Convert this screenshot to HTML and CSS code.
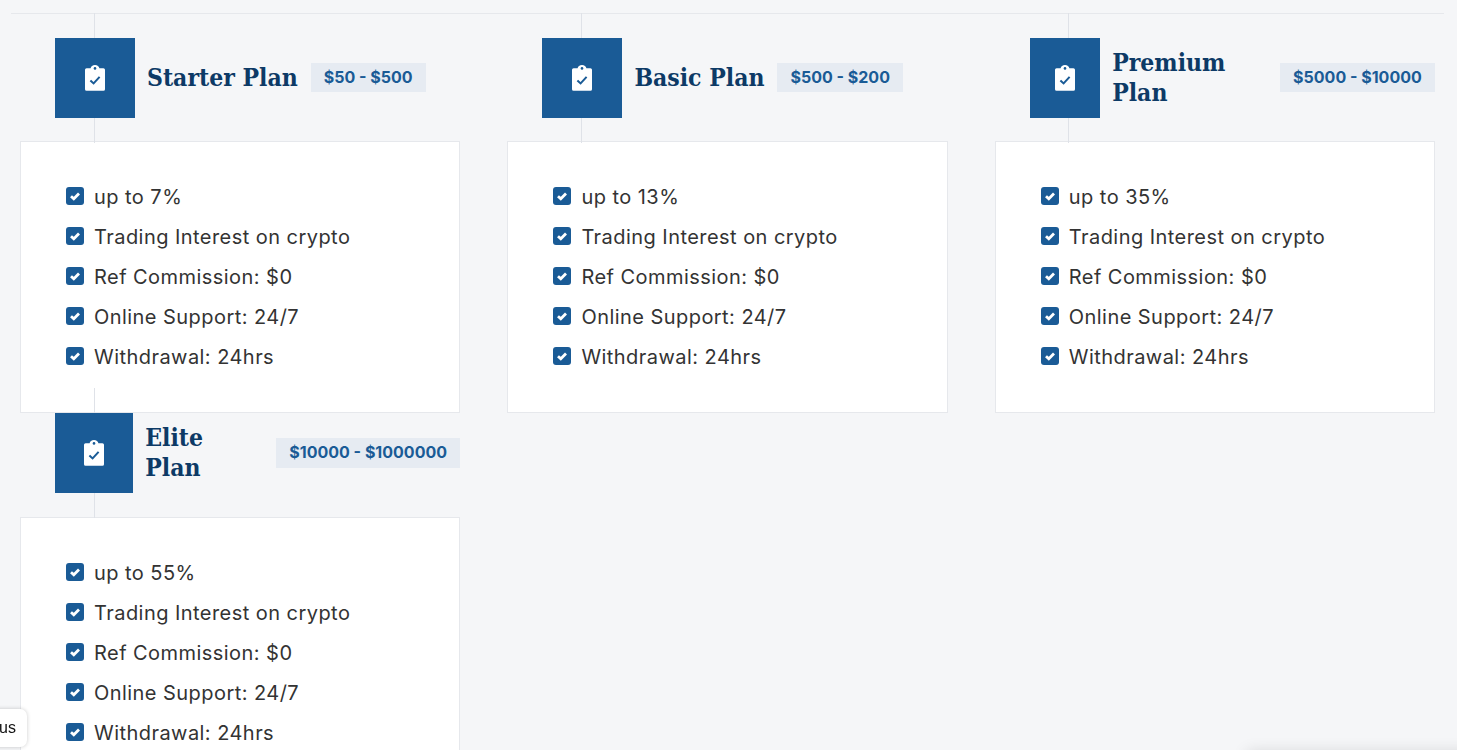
FILE: index.html
```html
<!DOCTYPE html>
<html lang="en">
<head>
    <meta charset="UTF-8">
    <meta name="viewport" content="width=device-width, initial-scale=1.0">
    <title>Investment Plans</title>
    <link rel="stylesheet" href="styles.css">
</head>
<body>
    <svg class="sprite" width="0" height="0" aria-hidden="true">
        <symbol id="clipboard" viewBox="0 0 20 26">
            <path fill="#fff" d="M1.6 3.2H5.6C5.8 1.3 7.7 0 10 0s4.2 1.3 4.4 3.2h4A1.6 1.6 0 0 1 20 4.8v19.4a1.6 1.6 0 0 1-1.6 1.6H1.6A1.6 1.6 0 0 1 0 24.2V4.8a1.6 1.6 0 0 1 1.6-1.6z"/>
            <circle fill="#1a5b96" cx="10" cy="3.4" r="1.3"/>
            <polyline fill="none" stroke="#1a5b96" stroke-width="2" points="5.4,15.4 8.6,18.4 14.6,11.8"/>
        </symbol>
        <symbol id="check" viewBox="0 0 18 18">
            <rect fill="#1a5b96" width="18" height="18" rx="3"/>
            <polyline fill="none" stroke="#fff" stroke-width="2.8" points="5,9.2 7.8,11.8 13,6.6"/>
        </symbol>
    </svg>

    <div class="page">
        <div class="plans">
            <div class="plan">
                <div class="plan-head">
                    <div class="plan-icon"><svg><use href="#clipboard"/></svg></div>
                    <h3 class="plan-title">Starter Plan</h3>
                    <span class="plan-range">$50 - $500</span>
                </div>
                <div class="plan-card">
                    <ul class="plan-list">
                        <li><svg><use href="#check"/></svg>up to 7%</li>
                        <li><svg><use href="#check"/></svg>Trading Interest on crypto</li>
                        <li><svg><use href="#check"/></svg>Ref Commission: $0</li>
                        <li><svg><use href="#check"/></svg>Online Support: 24/7</li>
                        <li><svg><use href="#check"/></svg>Withdrawal: 24hrs</li>
                    </ul>
                </div>
            </div>

            <div class="plan">
                <div class="plan-head">
                    <div class="plan-icon"><svg><use href="#clipboard"/></svg></div>
                    <h3 class="plan-title">Basic Plan</h3>
                    <span class="plan-range">$500 - $200</span>
                </div>
                <div class="plan-card">
                    <ul class="plan-list">
                        <li><svg><use href="#check"/></svg>up to 13%</li>
                        <li><svg><use href="#check"/></svg>Trading Interest on crypto</li>
                        <li><svg><use href="#check"/></svg>Ref Commission: $0</li>
                        <li><svg><use href="#check"/></svg>Online Support: 24/7</li>
                        <li><svg><use href="#check"/></svg>Withdrawal: 24hrs</li>
                    </ul>
                </div>
            </div>

            <div class="plan">
                <div class="plan-head">
                    <div class="plan-icon"><svg><use href="#clipboard"/></svg></div>
                    <h3 class="plan-title">Premium Plan</h3>
                    <span class="plan-range">$5000 - $10000</span>
                </div>
                <div class="plan-card">
                    <ul class="plan-list">
                        <li><svg><use href="#check"/></svg>up to 35%</li>
                        <li><svg><use href="#check"/></svg>Trading Interest on crypto</li>
                        <li><svg><use href="#check"/></svg>Ref Commission: $0</li>
                        <li><svg><use href="#check"/></svg>Online Support: 24/7</li>
                        <li><svg><use href="#check"/></svg>Withdrawal: 24hrs</li>
                    </ul>
                </div>
            </div>

            <div class="plan">
                <div class="plan-head">
                    <div class="plan-icon"><svg><use href="#clipboard"/></svg></div>
                    <h3 class="plan-title">Elite Plan</h3>
                    <span class="plan-range">$10000 - $1000000</span>
                </div>
                <div class="plan-card">
                    <ul class="plan-list">
                        <li><svg><use href="#check"/></svg>up to 55%</li>
                        <li><svg><use href="#check"/></svg>Trading Interest on crypto</li>
                        <li><svg><use href="#check"/></svg>Ref Commission: $0</li>
                        <li><svg><use href="#check"/></svg>Online Support: 24/7</li>
                        <li><svg><use href="#check"/></svg>Withdrawal: 24hrs</li>
                    </ul>
                </div>
            </div>
        </div>
    </div>

    <div class="chat-tab">us</div>
    <div class="corner-shadow"></div>
</body>
</html>
```

FILE: styles.css
```css
* {
    margin: 0;
    padding: 0;
    box-sizing: border-box;
}

html, body {
    height: 100%;
    overflow: hidden;
}

body {
    background: #f5f6f8;
    font-family: "Inter", "Open Sans", sans-serif;
    color: #333;
}

.sprite {
    position: absolute;
}

.page {
    margin: 13px 13px 0 11px;
    padding: 24px 9px 0;
    border-top: 1px solid #e6e8ec;
}

.plans {
    display: grid;
    grid-template-columns: repeat(3, 440.3px);
    column-gap: 47.1px;
}

.plan-head {
    position: relative;
    display: flex;
    align-items: center;
    width: 405px;
    height: 80px;
    margin-left: 35px;
    margin-bottom: 23.4px;
}

/* thin line running behind the icon */
.plan-head::before {
    content: "";
    position: absolute;
    left: 38.6px;
    top: -25px;
    width: 1px;
    height: 130px;
    background: #dfe2e8;
}

.plan-icon {
    position: relative;
    flex: 0 1 80px;
    height: 80px;
    background: #1a5b96;
    display: flex;
    align-items: center;
    justify-content: center;
}

.plan-icon svg {
    width: 20px;
    height: 26px;
}

.plan-title {
    margin: 0 13px 0 12px;
    font-family: "DejaVu Serif Condensed", "DejaVu Serif", serif;
    font-size: 24.5px;
    line-height: 30px;
    font-weight: 700;
    color: #0d3a66;
}

.plan-range {
    flex: none;
    padding: 0 13px;
    height: 29.6px;
    line-height: 28px;
    margin-top: -1px;
    background: #e6ebf2;
    color: #1a5b96;
    font-size: 16px;
    font-weight: 700;
    white-space: nowrap;
}

.plan-card {
    height: 272px;
    padding: 35px 45px;
    background: #fff;
    border: 1px solid #e6e8ec;
}

.plan-list {
    list-style: none;
}

.plan-list li {
    display: flex;
    align-items: center;
    gap: 10px;
    height: 40px;
    font-size: 20px;
    letter-spacing: 0.45px;
    color: #333;
}

.plan-list svg {
    flex: none;
    width: 18px;
    height: 18px;
    margin-top: -2px;
}

.chat-tab {
    position: fixed;
    left: -12px;
    top: 709px;
    width: 39px;
    height: 38px;
    padding-left: 11px;
    line-height: 37px;
    background: #fff;
    border-radius: 7px;
    box-shadow: 0 0 4px rgba(0, 0, 0, 0.2);
    font-family: "Liberation Sans", sans-serif;
    font-size: 16px;
    color: #111;
}

.corner-shadow {
    position: fixed;
    right: -20px;
    top: 752px;
    width: 230px;
    height: 40px;
    box-shadow: 0 0 16px rgba(0, 0, 0, 0.14);
}
```
